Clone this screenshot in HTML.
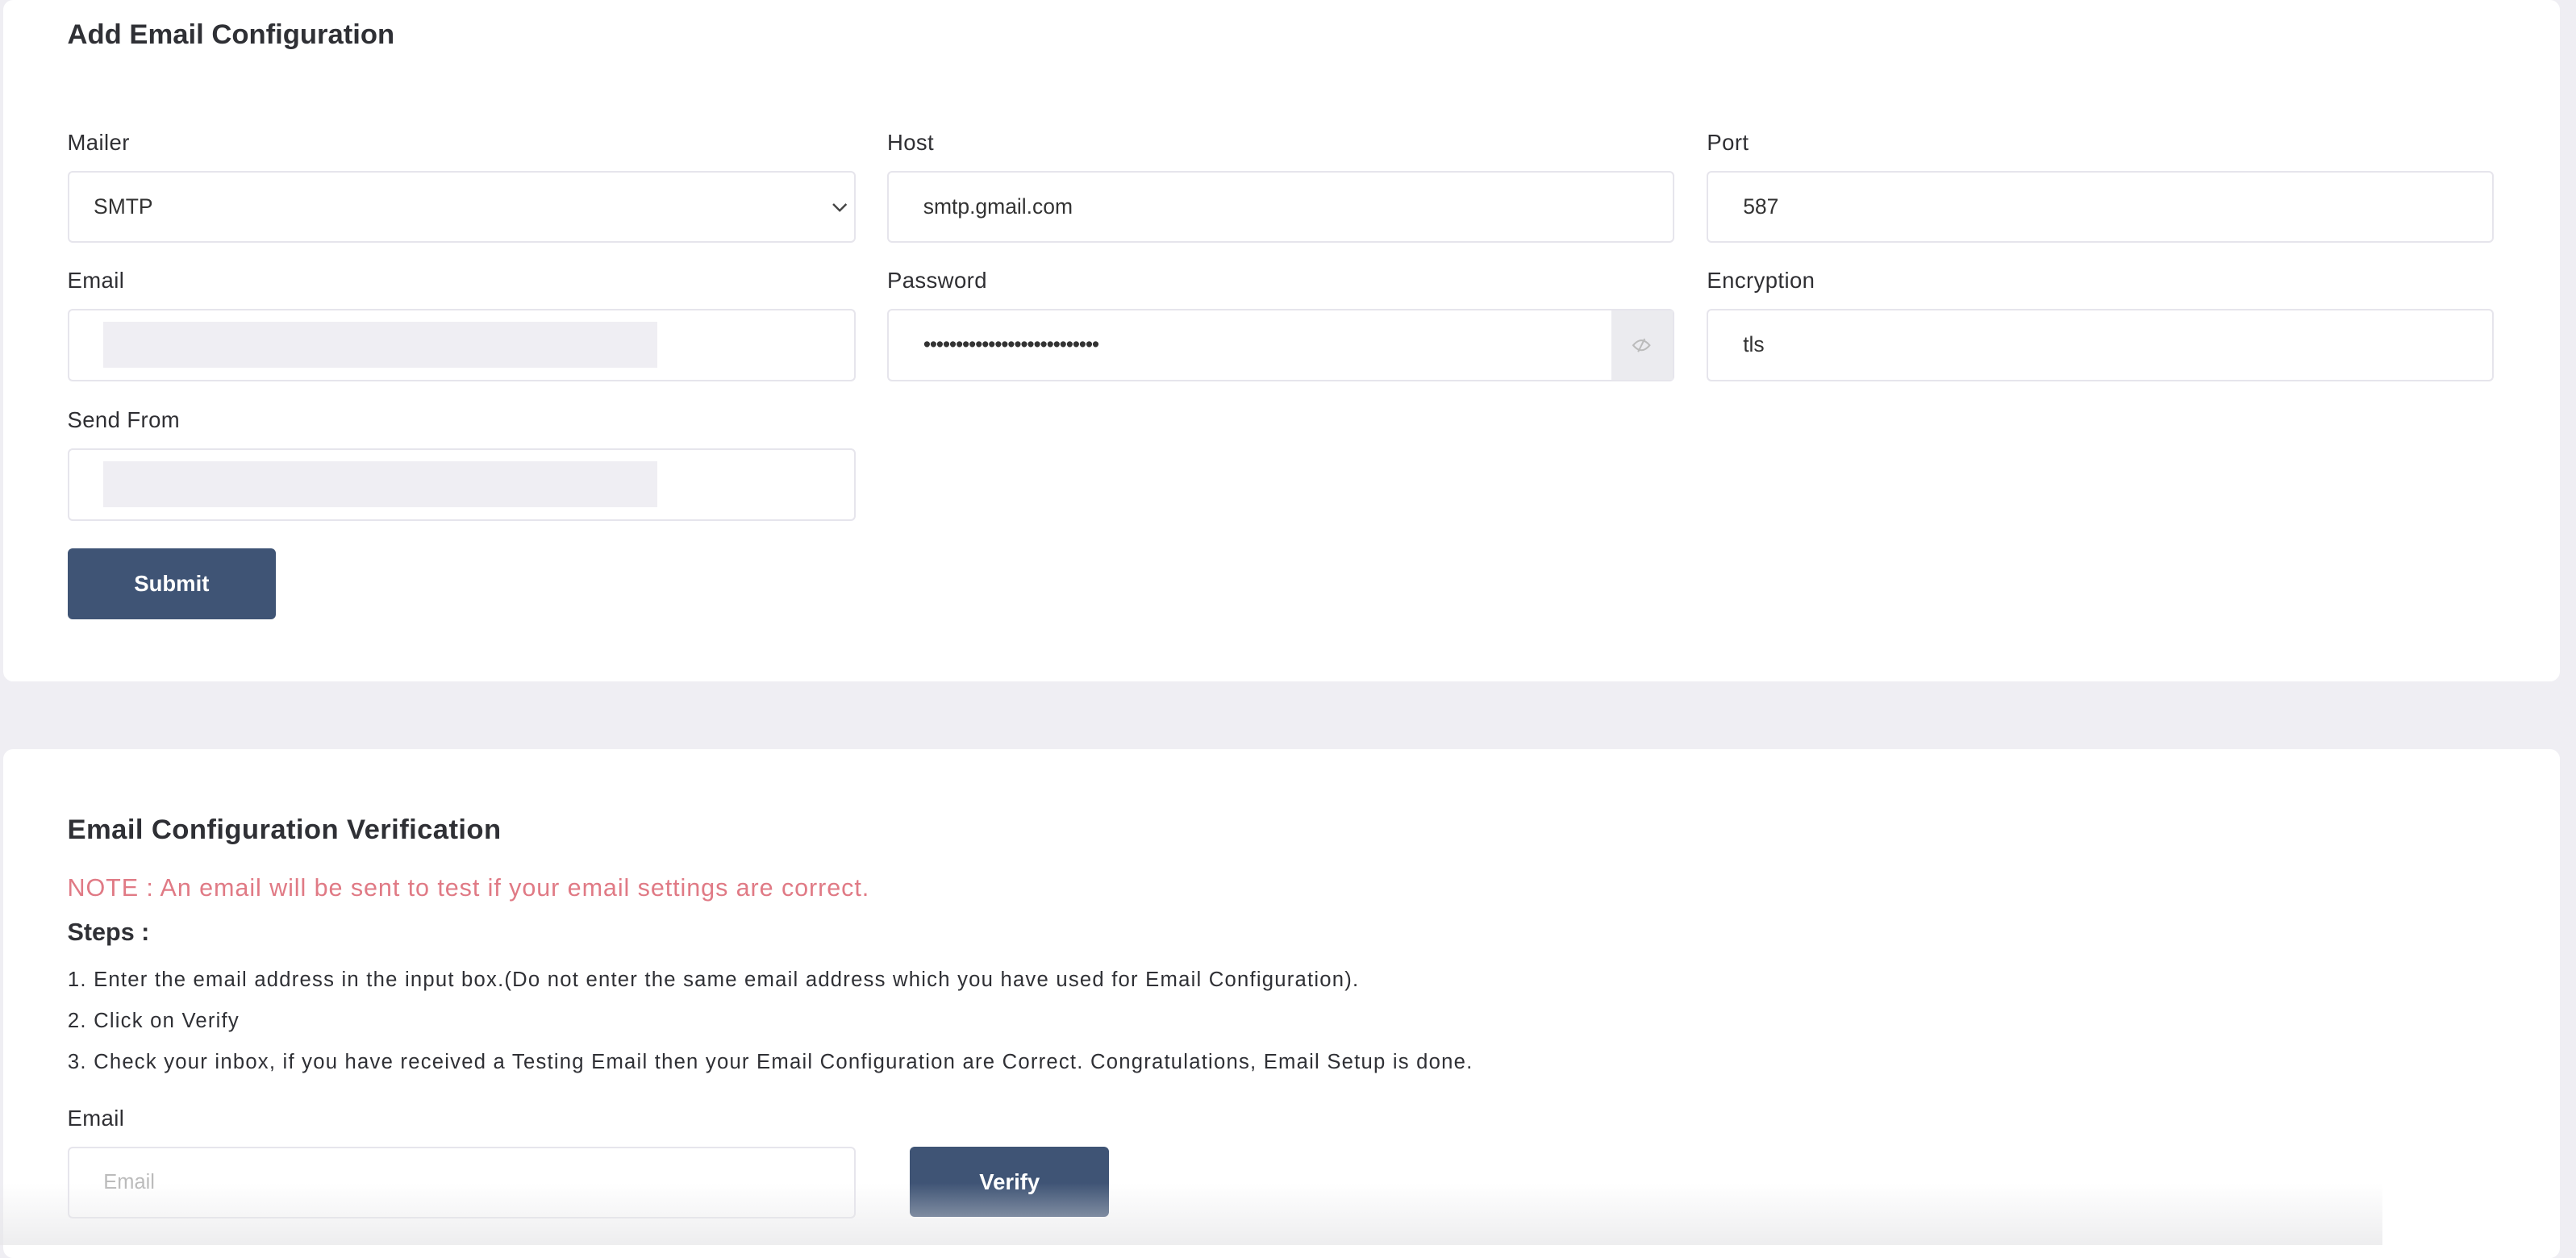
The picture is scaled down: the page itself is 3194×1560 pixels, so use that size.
<!DOCTYPE html>
<html><head><style>
html,body{margin:0;padding:0;}
body{width:3194px;height:1544px;overflow:hidden;background:#efeef3;font-family:"Liberation Sans",sans-serif;color:#333;}
#w{zoom:2.037;width:1568px;height:758px;position:relative;}
.card{position:absolute;left:2px;width:1556px;background:#fff;border-radius:6px;}
.abs{position:absolute;}
.lbl{position:absolute;font-size:13.5px;color:#2f2f33;letter-spacing:0.2px;}
.inp{position:absolute;height:44px;border:1px solid #e6e5ec;border-radius:3px;background:#fff;box-sizing:border-box;font-size:13px;color:#333;line-height:42px;padding-left:21px;}
.btn{position:absolute;background:#3f5475;color:#fff;font-weight:bold;font-size:13.5px;text-align:center;border-radius:3px;}
.gr{position:absolute;background:#efeef3;height:28px;top:7px;left:21px;width:337px;}
li{margin:0 0 8px 0;}
</style></head><body><div id="w">
<div class="card" style="top:0;height:415px;">
  <div class="abs" style="left:39px;top:12px;font-size:17px;font-weight:600;color:#2f3035;">Add Email Configuration</div>
  <div class="lbl" style="left:39px;top:79px;">Mailer</div>
  <div class="lbl" style="left:538px;top:79px;">Host</div>
  <div class="lbl" style="left:1037px;top:79px;">Port</div>
  <div class="inp" style="left:39px;top:104px;width:480px;padding-left:15px;">SMTP<svg style="position:absolute;right:4px;top:18px" width="10" height="7" viewBox="0 0 10 7"><path d="M1 1l4 4 4-4" fill="none" stroke="#444" stroke-width="1.2"/></svg></div>
  <div class="inp" style="left:538px;top:104px;width:479px;">smtp.gmail.com</div>
  <div class="inp" style="left:1037px;top:104px;width:479px;">587</div>
  <div class="lbl" style="left:39px;top:163px;">Email</div>
  <div class="lbl" style="left:538px;top:163px;">Password</div>
  <div class="lbl" style="left:1037px;top:163px;">Encryption</div>
  <div class="inp" style="left:39px;top:188px;width:480px;"><div class="gr"></div></div>
  <div class="inp" style="left:538px;top:188px;width:479px;letter-spacing:-0.6px;">•••••••••••••••••••••••••••<div style="position:absolute;right:0;top:0;width:37px;height:42px;background:#ebebef;"><svg style="position:absolute;left:12px;top:16px" width="12" height="10" viewBox="0 0 12 10"><path d="M1 5q5-6 10 0q-5 6-10 0z" fill="none" stroke="#bbb" stroke-width="1"/><path d="M4 9L8 1" stroke="#bbb" stroke-width="1"/></svg></div></div>
  <div class="inp" style="left:1037px;top:188px;width:479px;">tls</div>
  <div class="lbl" style="left:39px;top:248px;">Send From</div>
  <div class="inp" style="left:39px;top:273px;width:480px;"><div class="gr"></div></div>
  <div class="btn" style="left:39px;top:334px;width:127px;height:43px;line-height:43px;">Submit</div>
</div>
<div class="card" style="top:456px;height:310px;">
  <div class="abs" style="left:39px;top:40px;font-size:17px;font-weight:600;color:#2f3035;letter-spacing:0.2px;">Email Configuration Verification</div>
  <div class="abs" style="left:39px;top:76px;font-size:15px;color:#e07a85;letter-spacing:0.45px;">NOTE : An email will be sent to test if your email settings are correct.</div>
  <div class="abs" style="left:39px;top:103px;font-size:15px;font-weight:bold;color:#2f3035;">Steps :</div>
  <ol class="abs" style="left:39px;top:132px;margin:0;padding-left:16px;font-size:12.6px;color:#2f3035;line-height:17px;letter-spacing:0.6px;">
    <li>Enter the email address in the input box.(Do not enter the same email address which you have used for Email Configuration).</li>
    <li>Click on Verify</li>
    <li>Check your inbox, if you have received a Testing Email then your Email Configuration are Correct. Congratulations, Email Setup is done.</li>
  </ol>
  <div class="lbl" style="left:39px;top:217px;">Email</div>
  <div class="inp" style="left:39px;top:242px;width:480px;color:#bbb;font-size:12.5px;">Email</div>
  <div class="btn" style="left:552px;top:242px;width:121px;height:43px;line-height:43px;">Verify</div>
</div>
<div class="abs" style="left:0;top:720px;width:1450px;height:38px;background:linear-gradient(to bottom,rgba(230,230,232,0),rgba(230,230,232,.7));"></div>
</div></body></html>
